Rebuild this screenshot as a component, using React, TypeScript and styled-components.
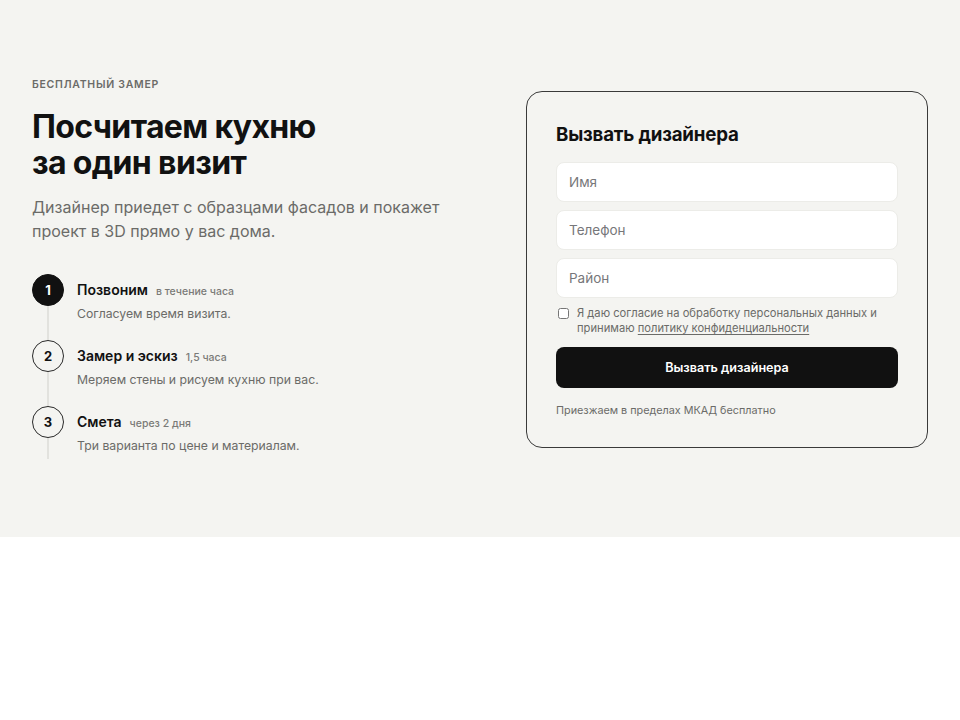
import React from "react";
import styled, { createGlobalStyle } from "styled-components";

const GlobalStyle = createGlobalStyle`
  * { box-sizing: border-box; }
  body {
    margin: 0;
    background: #ffffff;
    font-family: Inter, "Noto Sans", sans-serif;
    color: #111111;
  }
`;

const steps = [
  { num: "1", title: "Позвоним", note: "в течение часа", text: "Согласуем время визита.", active: true },
  { num: "2", title: "Замер и эскиз", note: "1,5 часа", text: "Меряем стены и рисуем кухню при вас.", active: false },
  { num: "3", title: "Смета", note: "через 2 дня", text: "Три варианта по цене и материалам.", active: false },
];

const App: React.FC = () => {
  return (
    <>
      <GlobalStyle />
      <Section>
        <Intro>
          <Eyebrow>Бесплатный замер</Eyebrow>
          <Heading>
            Посчитаем кухню
            <br />
            за один визит
          </Heading>
          <Lead>
            Дизайнер приедет с образцами фасадов и покажет проект в 3D прямо у вас дома.
          </Lead>
          <Steps>
            {steps.map((s) => (
              <Step key={s.num}>
                <Marker $active={s.active}>{s.num}</Marker>
                <StepBody>
                  <StepTitle>
                    {s.title}
                    <StepNote>{s.note}</StepNote>
                  </StepTitle>
                  <StepText>{s.text}</StepText>
                </StepBody>
              </Step>
            ))}
          </Steps>
        </Intro>

        <Card>
          <CardTitle>Вызвать дизайнера</CardTitle>
          <Fields>
            <Field type="text" placeholder="Имя" />
            <Field type="tel" placeholder="Телефон" />
            <Field type="text" placeholder="Район" />
          </Fields>
          <Consent>
            <Checkbox type="checkbox" />
            <ConsentText>
              Я даю согласие на обработку персональных данных и принимаю{" "}
              <PolicyLink href="#">политику конфиденциальности</PolicyLink>
            </ConsentText>
          </Consent>
          <Submit type="button">Вызвать дизайнера</Submit>
          <Footnote>Приезжаем в пределах МКАД бесплатно</Footnote>
        </Card>
      </Section>
    </>
  );
};

const Section = styled.section`
  background: #f4f4f1;
  padding: 78px 32px 0;
  height: 537px;
  display: grid;
  grid-template-columns: 1fr 402px;
  column-gap: 48px;
  align-items: start;
`;

const Intro = styled.div`
  display: flex;
  flex-direction: column;
`;

const Eyebrow = styled.div`
  font-size: 10.5px;
  font-weight: 600;
  letter-spacing: 0.07em;
  text-transform: uppercase;
  color: #6b6b68;
  line-height: 14px;
`;

const Heading = styled.h1`
  margin: 17px 0 0;
  font-size: 32px;
  line-height: 36px;
  font-weight: 700;
  letter-spacing: -0.02em;
  color: #111111;
`;

const Lead = styled.p`
  margin: 14px 0 0;
  max-width: 450px;
  font-size: 16px;
  line-height: 24px;
  color: #6b6b68;
`;

const Steps = styled.ol`
  list-style: none;
  margin: 31px 0 0;
  padding: 0;
  position: relative;
  display: flex;
  flex-direction: column;
  gap: 17px;

  &::before {
    content: "";
    position: absolute;
    left: 15px;
    top: 16px;
    bottom: -4px;
    width: 2px;
    background: #e2e2de;
  }
`;

const Step = styled.li`
  display: flex;
  gap: 13px;
  position: relative;
`;

const Marker = styled.span<{ $active: boolean }>`
  flex: none;
  width: 32px;
  height: 32px;
  border-radius: 50%;
  display: flex;
  align-items: center;
  justify-content: center;
  font-size: 13px;
  font-weight: 700;
  background: ${(p) => (p.$active ? "#111111" : "#f4f4f1")};
  color: ${(p) => (p.$active ? "#ffffff" : "#111111")};
  border: 1px solid ${(p) => (p.$active ? "#111111" : "#2a2a2a")};
`;

const StepBody = styled.div`
  padding-top: 6px;
`;

const StepTitle = styled.div`
  font-size: 14px;
  font-weight: 600;
  line-height: 20px;
  color: #111111;
`;

const StepNote = styled.span`
  margin-left: 8px;
  font-size: 10.5px;
  font-weight: 500;
  color: #7a7a77;
`;

const StepText = styled.div`
  margin-top: 3px;
  font-size: 12.25px;
  line-height: 18px;
  color: #6b6b68;
`;

const Card = styled.form`
  margin-top: 13px;
  border: 1px solid #3a3a3a;
  border-radius: 16px;
  padding: 30px 29px 29px;
  display: flex;
  flex-direction: column;
`;

const CardTitle = styled.h2`
  margin: 0;
  font-size: 18.7px;
  line-height: 26px;
  font-weight: 700;
  letter-spacing: -0.01em;
  color: #111111;
`;

const Fields = styled.div`
  margin-top: 14px;
  display: flex;
  flex-direction: column;
  gap: 8px;
`;

const Field = styled.input`
  height: 40px;
  width: 100%;
  padding: 0 12px;
  border: 1px solid #ecece8;
  border-radius: 8px;
  background: #ffffff;
  font-family: inherit;
  font-size: 13.5px;
  color: #111111;
  outline: none;

  &::placeholder {
    color: #77777a;
  }
`;

const Consent = styled.label`
  margin-top: 8px;
  display: flex;
  align-items: flex-start;
  gap: 8px;
  font-size: 11.2px;
  line-height: 15px;
  color: #6b6b68;
`;

const ConsentText = styled.span`
  flex: 1;
`;

const Checkbox = styled.input`
  margin: 2px 0 0 2px;
  width: 11px;
  height: 11px;
  flex: none;
`;

const PolicyLink = styled.a`
  color: #6b6b68;
  text-decoration: underline;
  text-underline-offset: 2px;
`;

const Submit = styled.button`
  margin-top: 11px;
  height: 41px;
  border: none;
  border-radius: 8px;
  background: #111111;
  color: #ffffff;
  font-family: inherit;
  font-size: 12.6px;
  font-weight: 600;
  cursor: pointer;
`;

const Footnote = styled.div`
  margin-top: 16px;
  font-size: 10.8px;
  line-height: 14px;
  color: #6b6b68;
`;

export default App;
